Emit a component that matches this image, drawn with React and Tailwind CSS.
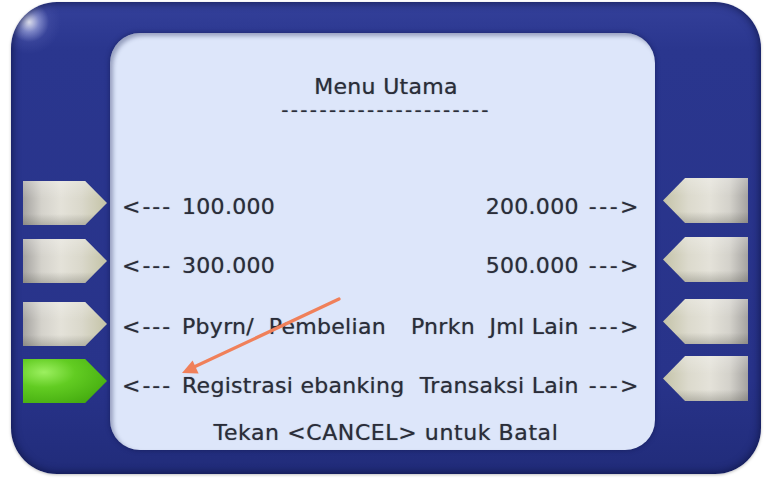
import React from "react";

const font = { fontFamily: '"DejaVu Sans", Verdana, sans-serif' };

function LeftBtn({ green, className = "" }) {
  return (
    <div
      className={
        "w-[84px] h-[44px] [clip-path:polygon(0_0,74%_0,100%_50%,74%_100%,0_100%)] " +
        (green
          ? "bg-[radial-gradient(ellipse_at_25%_30%,#9cf060_0%,#62cc22_35%,#4cb414_70%,#3a9a0c_100%)]"
          : "bg-[linear-gradient(180deg,rgba(255,255,255,0.25)_0%,rgba(255,255,255,0)_40%,rgba(0,0,0,0)_75%,rgba(60,60,50,0.25)_100%),linear-gradient(90deg,#a5a3a0_0%,#d4d2cb_22%,#e4e2d9_45%,#dad8cb_70%,#c4c3a6_100%)]") +
        " " +
        className
      }
    />
  );
}

function RightBtn({ className = "" }) {
  return (
    <div
      className={
        "w-[85px] h-[45px] [clip-path:polygon(26%_0,100%_0,100%_100%,26%_100%,0_50%)] bg-[linear-gradient(180deg,rgba(255,255,255,0.25)_0%,rgba(255,255,255,0)_40%,rgba(0,0,0,0)_75%,rgba(60,60,50,0.25)_100%),linear-gradient(90deg,#c4c3a8_0%,#dcdacd_30%,#e4e2d9_55%,#d4d2cb_78%,#a5a3a0_100%)] " +
        className
      }
    />
  );
}

function Row({ left, right, className = "" }) {
  return (
    <div className={"flex items-center justify-between h-[26px] leading-[26px] " + className}>
      <div className="flex whitespace-pre">
        <span className="w-[60px] tracking-[2px]">{"<---"}</span>
        <span>{left}</span>
      </div>
      <div className="flex whitespace-pre">
        <span>{right}</span>
        <span className="ml-[10px] tracking-[2.5px] mr-[-2px]">{"--->"}</span>
      </div>
    </div>
  );
}

export default function App() {
  return (
    <div className="relative w-[767px] h-[479px] bg-white overflow-hidden" style={font}>
      <div className="ml-[11px] mt-[2px] w-[750px] h-[472px] rounded-[46px] flex bg-[radial-gradient(circle_at_18px_20px,rgba(255,255,255,0.85)_0px,rgba(200,206,248,0.5)_10px,rgba(90,100,180,0.25)_20px,rgba(60,70,160,0)_32px),linear-gradient(180deg,#34409a_0%,#2a368e_10%,#28338a_80%,#212c7a_100%)] shadow-[inset_0_0_10px_rgba(8,12,50,0.8),0_1px_3px_rgba(0,0,0,0.25)]">
        <div className="w-[99px] pl-[12px] pt-[179px] flex flex-col">
          <LeftBtn />
          <LeftBtn className="mt-[14px]" />
          <LeftBtn className="mt-[19px]" />
          <LeftBtn green className="mt-[13px]" />
        </div>
        <div className="mt-[31px] w-[545px] h-[417px] rounded-[30px] bg-[#dde6fa] shadow-[inset_3px_3px_4px_rgba(20,30,80,0.35),0_0_5px_rgba(10,15,60,0.5)] pl-[12px] pr-[16px] pt-[41px] flex flex-col text-[22px] tracking-[0.3px] text-[#2a2d39] [text-shadow:0_0_1px_rgba(43,46,59,0.6)]">
          <div className="pl-[11px] text-center h-[26px] leading-[26px]">Menu Utama</div>
          <div className="pl-[11px] text-center h-[20px] leading-[20px] text-[20px] tracking-[2.3px]">
            {"----------------------"}
          </div>
          <Row className="mt-[74px]" left="100.000" right="200.000" />
          <Row className="mt-[33px]" left="300.000" right="500.000" />
          <Row className="mt-[35px]" left="Pbyrn/  Pembelian" right="Pnrkn  Jml Lain" />
          <Row className="mt-[33px]" left="Registrasi ebanking" right="Transaksi Lain" />
          <div className="pl-[11px] mt-[21px] text-center h-[26px] leading-[26px] whitespace-pre tracking-[0.6px]">
            {"Tekan <CANCEL> untuk Batal"}
          </div>
        </div>
        <div className="flex-1 pl-[8px] pt-[176px] flex flex-col">
          <RightBtn />
          <RightBtn className="mt-[14px]" />
          <RightBtn className="mt-[17px]" />
          <RightBtn className="mt-[12px]" />
        </div>
      </div>
      <svg className="absolute left-0 top-0 pointer-events-none" width="767" height="479">
        <line x1="339" y1="299" x2="194" y2="367" stroke="#f0805a" strokeWidth="3.2" strokeLinecap="round" />
        <polygon points="182,373 192.6,360.6 198.6,373.4" fill="#f0805a" />
      </svg>
    </div>
  );
}
